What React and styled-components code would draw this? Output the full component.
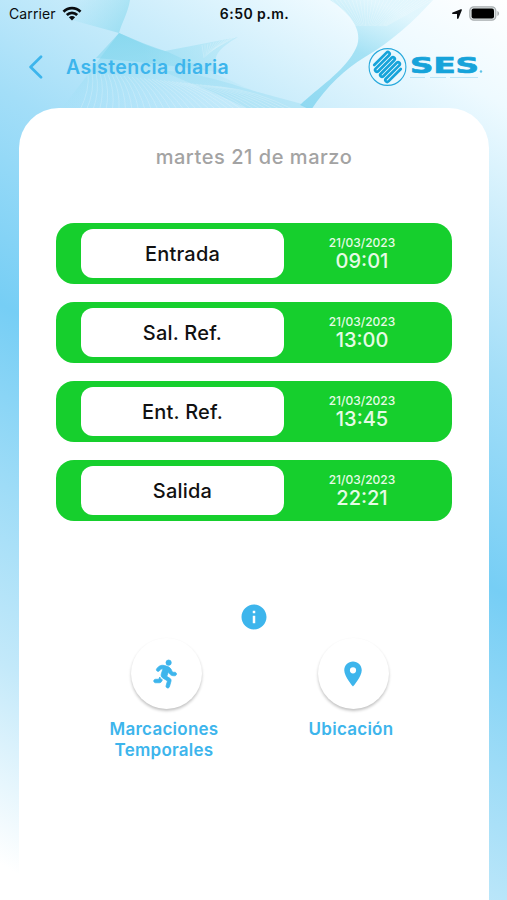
import React from 'react'
import styled, { createGlobalStyle } from 'styled-components'
import { MdInfo, MdLocationOn } from 'react-icons/md'
import { FaPersonRunning, FaLocationArrow } from 'react-icons/fa6'

const marks = [
  { label: 'Entrada', date: '21/03/2023', time: '09:01' },
  { label: 'Sal. Ref.', date: '21/03/2023', time: '13:00' },
  { label: 'Ent. Ref.', date: '21/03/2023', time: '13:45' },
  { label: 'Salida', date: '21/03/2023', time: '22:21' },
]

const range = (n) => Array.from({ length: n }, (_, i) => i)

// ribbons of fine lines behind the header
const Waves = () => (
  <WavesSvg viewBox="0 0 507 110" fill="none">
    <defs>
      <linearGradient id="ribbonLeft" x1="70" y1="0" x2="125" y2="35" gradientUnits="userSpaceOnUse">
        <stop offset="0" stopColor="#8fdcf0" stopOpacity="0" />
        <stop offset="1" stopColor="#7fd6ec" stopOpacity=".6" />
      </linearGradient>
      <linearGradient id="ribbonMid" x1="120" y1="33" x2="125" y2="108" gradientUnits="userSpaceOnUse">
        <stop offset="0" stopColor="#7ad4ec" stopOpacity=".65" />
        <stop offset="1" stopColor="#9be0f3" stopOpacity="0" />
      </linearGradient>
      <linearGradient id="ribbonRight" x1="370" y1="0" x2="325" y2="108" gradientUnits="userSpaceOnUse">
        <stop offset="0" stopColor="#b5e9f8" stopOpacity=".3" />
        <stop offset=".45" stopColor="#94dcf2" stopOpacity=".8" />
        <stop offset="1" stopColor="#86d6f0" stopOpacity=".85" />
      </linearGradient>
      <linearGradient id="wing" x1="238" y1="36" x2="150" y2="70" gradientUnits="userSpaceOnUse">
        <stop offset="0" stopColor="#9fe2f4" stopOpacity=".35" />
        <stop offset="1" stopColor="#7fd5ed" stopOpacity=".5" />
      </linearGradient>
    </defs>
    <path d="M130 0C128 13 122 22 119 33L50 14L60 0Z" fill="url(#ribbonLeft)" />
    <path d="M119 33C135 40 150 46 168 52C190 62 220 76 254 91L302 104L312 110H60C75 92 94 66 119 33Z" fill="url(#ribbonMid)" />
    <path d="M119 33C140 43 155 49 165 51L238 37C218 49 210 57 220 73C180 66 140 62 96 58Z" fill="url(#wing)" />
    <path d="M160 70C200 73 225 82 254 91L302 104L311 110H250C220 95 190 83 160 70Z" fill="#8edaf1" opacity=".35" />
    <path d="M330 0C352 14 366 34 354 52C343 72 318 88 300 105L311 110C327 86 345 69 365 57C390 43 415 20 433 0Z" fill="url(#ribbonRight)" />
    <g stroke="#fff" strokeWidth=".6" opacity=".4">
      {range(26).map((i) => (
        <path key={i} d={`M${332 + i * 4} 0L${356 + i * 1.2} 26`} />
      ))}
    </g>
    <g stroke="#fff" strokeWidth=".6" opacity=".35">
      {range(34).map((i) => (
        <path key={i} d={`M${88 + i * 4} ${72 + i * 0.45}Q${90 + i * 5} 90 ${80 + i * 6.5} 110`} />
      ))}
      {range(12).map((i) => (
        <path key={i} d={`M${202 + i * 3} ${45 - i * 0.7}L${204 + i} ${58 - i * 0.9}`} />
      ))}
    </g>
  </WavesSvg>
)

const WifiIcon = () => (
  <svg width="20" height="15" viewBox="0 0 20 15" fill="none" stroke="#0a0d10" strokeWidth="2.7">
    <path d="M1.5 5.7C6.3 .9 13.7 .9 18.5 5.7" />
    <path d="M4.8 9C7.7 6.1 12.3 6.1 15.2 9" />
    <path d="M10 14.6L6.9 11.3C8.7 9.7 11.3 9.7 13.1 11.3Z" fill="#0a0d10" stroke="none" />
  </svg>
)

const BatteryIcon = () => (
  <svg width="31" height="15" viewBox="0 0 31 15">
    <rect x=".8" y=".8" width="26" height="13.4" rx="4" fill="#dfe4e5" stroke="#a9aeb0" strokeWidth="1.2" />
    <rect x="2.6" y="2.5" width="22.4" height="10" rx="2" fill="#000" />
    <path d="M28.4 5C30.6 5.8 30.6 9.2 28.4 10Z" fill="#a9aeb0" />
  </svg>
)

const Logo = () => (
  <svg width="116" height="40" viewBox="0 0 116 40">
    <circle cx="19.5" cy="20" r="18.4" fill="#e9f8fe" stroke="#27a9dc" strokeWidth="1.1" />
    <g transform="translate(19.5 20) rotate(-45)" fill="none" stroke="#16a3da" strokeWidth="2.7" strokeLinejoin="round" strokeLinecap="round">
      <path d="M-8 -10.8H9.5Q11.3 -10.8 11.3 -9T9.5 -7.2H-9.5Q-11.3 -7.2 -11.3 -5.4T-9.5 -3.6H9.5Q11.3 -3.6 11.3 -1.8T9.5 0H-9.5Q-11.3 0 -11.3 1.8T-9.5 3.6H9.5Q11.3 3.6 11.3 5.4T9.5 7.2H-9.5Q-11.3 7.2 -11.3 9T-9.5 10.8H8" />
    </g>
    <text x="42" y="25.6" textLength="69" lengthAdjust="spacingAndGlyphs" fontFamily="'DejaVu Sans', sans-serif" fontWeight="700" fontSize="21.5" fill="#16a3da" stroke="#16a3da" strokeWidth=".7">SES</text>
    <circle cx="113" cy="24.5" r="1.2" fill="#5fc4e8" />
    <path d="M42 30.5H110" stroke="#8fd3ee" strokeWidth="1" strokeDasharray="15 5 16 4 28 9" opacity=".5" />
  </svg>
)

const MarkRow = ({ label, date, time }) => {
  return (
    <Row>
      <RowLabel>{label}</RowLabel>
      <RowInfo>
        <span>{date}</span>
        <strong>{time}</strong>
      </RowInfo>
    </Row>
  )
}

const App = () => {
  return (
    <Screen>
      <GlobalStyle />
      <Waves />
      <StatusBar>
        <Carrier>
          Carrier <WifiIcon />
        </Carrier>
        <Clock>6:50 p.m.</Clock>
        <StatusIcons>
          <FaLocationArrow size={12} />
          <BatteryIcon />
        </StatusIcons>
      </StatusBar>
      <Header>
        <BackButton aria-label="Volver">
          <svg width="16" height="24" viewBox="0 0 16 24" fill="none" stroke="#3db5ec" strokeWidth="2.7" strokeLinecap="round" strokeLinejoin="round">
            <path d="M13 1.8L2.6 12L13 22.2" />
          </svg>
        </BackButton>
        <Title>Asistencia diaria</Title>
        <Logo />
      </Header>
      <Panel>
        <Today>martes 21 de marzo</Today>
        <List>
          {marks.map((item) => (
            <MarkRow key={item.label} {...item} />
          ))}
        </List>
        <InfoButton aria-label="Información">
          <MdInfo size={30} />
        </InfoButton>
        <Actions>
          <Action>
            <ActionButton>
              <RunIcon size={28} />
            </ActionButton>
            <ActionLabel>
              Marcaciones
              <br />
              Temporales
            </ActionLabel>
          </Action>
          <Action>
            <ActionButton>
              <MdLocationOn size={30} />
            </ActionButton>
            <ActionLabel>Ubicación</ActionLabel>
          </Action>
        </Actions>
      </Panel>
    </Screen>
  )
}

export default App

const GlobalStyle = createGlobalStyle`
* {
  box-sizing: border-box;
}
body {
  margin: 0;
  font-family: Inter, "Liberation Sans", sans-serif;
}
button {
  border: none;
  background: none;
  padding: 0;
  color: inherit;
}
svg {
  display: block;
}
`

const Screen = styled.div`
position: relative;
width: 507px;
height: 900px;
overflow: hidden;
display: flex;
flex-direction: column;
background: linear-gradient(210deg, #fff 0%, #eefaff 9%, #c9ecfb 20%, #a3def8 32%, #76cef5 50%, #9edcf7 65%, #c3e9fa 80%, #fff 97%);
`

const WavesSvg = styled.svg`
position: absolute;
top: 0;
left: 0;
width: 507px;
height: 110px;
`

const StatusBar = styled.div`
position: relative;
display: grid;
grid-template-columns: 1fr auto 1fr;
align-items: center;
height: 27px;
padding: 0 7px 0 9px;
color: #0a0d10;
`

const Carrier = styled.div`
display: flex;
align-items: center;
gap: 6px;
font-size: 14px;
letter-spacing: 0.1px;
`

const Clock = styled.div`
font-size: 14px;
font-weight: 600;
letter-spacing: 0.45px;
`

const StatusIcons = styled.div`
display: flex;
align-items: center;
justify-content: flex-end;
gap: 6px;
`

const Header = styled.div`
position: relative;
display: flex;
align-items: center;
height: 81px;
padding: 0 23px 2px 28px;
`

const BackButton = styled.button`
width: 38px;
`

const Title = styled.h1`
flex: 1;
margin: 0;
font-size: 19.5px;
font-weight: 600;
letter-spacing: 0.42px;
color: #3db5ec;
`

const Panel = styled.div`
position: relative;
flex: 1;
margin: 0 18px 0 19px;
padding: 36px 37px 0;
border-radius: 40px 40px 0 0;
background: #fff;
display: flex;
flex-direction: column;
align-items: center;
`

const Today = styled.div`
font-size: 20px;
line-height: 26px;
font-weight: 500;
letter-spacing: 0.55px;
color: #a3a3a3;
`

const List = styled.div`
align-self: stretch;
display: flex;
flex-direction: column;
gap: 18px;
margin-top: 53px;
`

const Row = styled.div`
display: flex;
height: 61px;
padding: 6px 0 6px 25px;
border-radius: 18px;
background: #16cf2d;
`

const RowLabel = styled.div`
display: flex;
align-items: center;
justify-content: center;
width: 203px;
border-radius: 12px;
background: #fff;
font-size: 20px;
font-weight: 500;
letter-spacing: 0.2px;
color: #111;
`

const RowInfo = styled.div`
display: flex;
flex-direction: column;
align-items: center;
justify-content: center;
width: 156px;
color: #e6fbe6;
font-weight: 500;
span {
  font-size: 12px;
  line-height: 15px;
}
strong {
  font-size: 20px;
  font-weight: 500;
  line-height: 22px;
}
`

const InfoButton = styled.button`
margin-top: 81px;
color: #3db5ec;
`

const Actions = styled.div`
display: flex;
margin-top: 6px;
margin-left: 11px;
`

const Action = styled.div`
display: flex;
flex-direction: column;
align-items: center;
width: 187px;
`

const ActionButton = styled.button`
display: flex;
align-items: center;
justify-content: center;
width: 71px;
height: 71px;
border-radius: 50%;
background: #fff;
box-shadow: 0 2px 3px rgba(0, 0, 0, 0.24);
color: #3db5ec;
`

const RunIcon = styled(FaPersonRunning)`
overflow: visible;
stroke: currentColor;
stroke-width: 14px;
stroke-linejoin: round;
`

const ActionLabel = styled.div`
margin-top: 10px;
margin-right: 4px;
font-size: 17px;
font-weight: 600;
line-height: 21px;
letter-spacing: 0.25px;
text-align: center;
color: #3db5ec;
`
